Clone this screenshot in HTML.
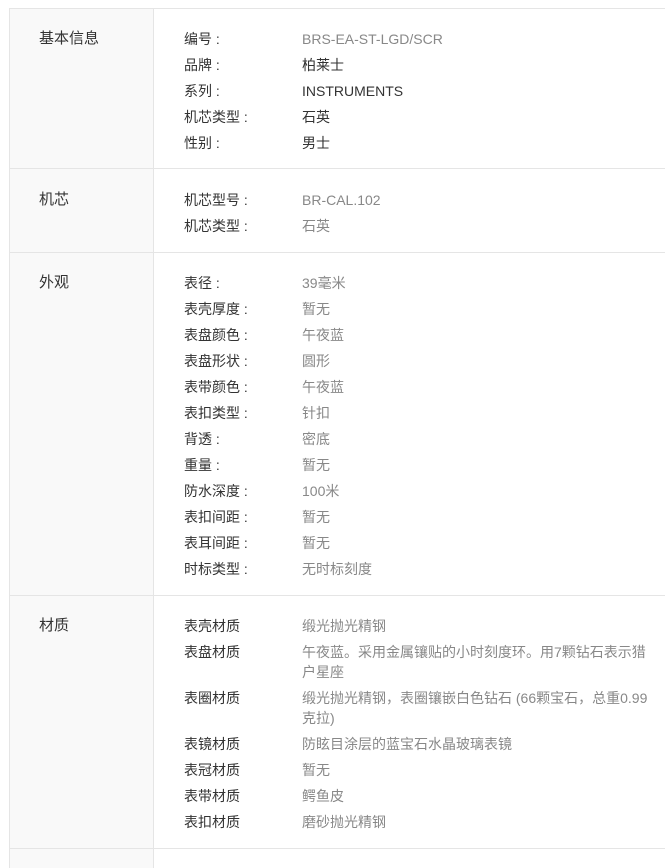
<!DOCTYPE html>
<html><head><meta charset="utf-8"><style>
body{margin:0;width:665px;height:862px;overflow:hidden;background:#fff;font-family:"Liberation Sans","Noto Sans CJK SC",sans-serif;font-size:14px;position:relative}
.l{position:absolute;left:9px;top:8px;width:143px;height:860px;background:#f9f9f9;border-left:1px solid #e5e5e5;border-right:1px solid #e5e5e5}
.h{position:absolute;left:9px;width:660px;height:1px;background:#e5e5e5}
.t{position:absolute;left:39px;font-size:15px;color:#333;line-height:20px}
.k{position:absolute;left:184px;color:#333;line-height:20px;white-space:pre}
.v{position:absolute;left:302px;width:360px;color:#888;line-height:20px}
.b{color:#333}
</style></head><body>
<div class="l"></div>
<div class="h" style="top:8px"></div>
<div class="h" style="top:168px"></div>
<div class="h" style="top:252px"></div>
<div class="h" style="top:595px"></div>
<div class="h" style="top:848px"></div>

<div class="t" style="top:29px">基本信息</div>
<div class="k" style="top:29px">编号 :</div><div class="v" style="top:29px">BRS-EA-ST-LGD/SCR</div>
<div class="k" style="top:55px">品牌 :</div><div class="v b" style="top:55px">柏莱士</div>
<div class="k" style="top:81px">系列 :</div><div class="v b" style="top:81px">INSTRUMENTS</div>
<div class="k" style="top:107px">机芯类型 :</div><div class="v b" style="top:107px">石英</div>
<div class="k" style="top:133px">性别 :</div><div class="v b" style="top:133px">男士</div>

<div class="t" style="top:190px">机芯</div>
<div class="k" style="top:190px">机芯型号 :</div><div class="v" style="top:190px">BR-CAL.102</div>
<div class="k" style="top:216px">机芯类型 :</div><div class="v" style="top:216px">石英</div>

<div class="t" style="top:273px">外观</div>
<div class="k" style="top:273px">表径 :</div><div class="v" style="top:273px">39毫米</div>
<div class="k" style="top:299px">表壳厚度 :</div><div class="v" style="top:299px">暂无</div>
<div class="k" style="top:325px">表盘颜色 :</div><div class="v" style="top:325px">午夜蓝</div>
<div class="k" style="top:351px">表盘形状 :</div><div class="v" style="top:351px">圆形</div>
<div class="k" style="top:377px">表带颜色 :</div><div class="v" style="top:377px">午夜蓝</div>
<div class="k" style="top:403px">表扣类型 :</div><div class="v" style="top:403px">针扣</div>
<div class="k" style="top:429px">背透 :</div><div class="v" style="top:429px">密底</div>
<div class="k" style="top:455px">重量 :</div><div class="v" style="top:455px">暂无</div>
<div class="k" style="top:481px">防水深度 :</div><div class="v" style="top:481px">100米</div>
<div class="k" style="top:507px">表扣间距 :</div><div class="v" style="top:507px">暂无</div>
<div class="k" style="top:533px">表耳间距 :</div><div class="v" style="top:533px">暂无</div>
<div class="k" style="top:559px">时标类型 :</div><div class="v" style="top:559px">无时标刻度</div>

<div class="t" style="top:616px">材质</div>
<div class="k" style="top:616px">表壳材质</div><div class="v" style="top:616px">缎光抛光精钢</div>
<div class="k" style="top:642px">表盘材质</div><div class="v" style="top:642px">午夜蓝。采用金属镶贴的小时刻度环。用7颗钻石表示猎<br>户星座</div>
<div class="k" style="top:688px">表圈材质</div><div class="v" style="top:688px">缎光抛光精钢，表圈镶嵌白色钻石 (66颗宝石，总重0.99<br>克拉)</div>
<div class="k" style="top:734px">表镜材质</div><div class="v" style="top:734px">防眩目涂层的蓝宝石水晶玻璃表镜</div>
<div class="k" style="top:760px">表冠材质</div><div class="v" style="top:760px">暂无</div>
<div class="k" style="top:786px">表带材质</div><div class="v" style="top:786px">鳄鱼皮</div>
<div class="k" style="top:812px">表扣材质</div><div class="v" style="top:812px">磨砂抛光精钢</div>
</body></html>
